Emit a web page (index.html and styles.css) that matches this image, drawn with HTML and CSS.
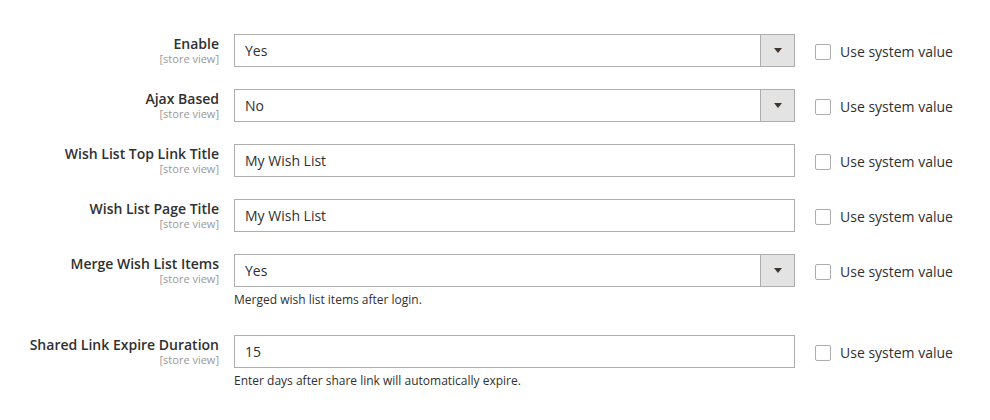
FILE: index.html
```html
<!DOCTYPE html>
<html>
<head>
<meta charset="utf-8">
<link rel="stylesheet" href="styles.css">
</head>
<body>
<div class="form">
  <div class="row">
    <div class="label"><span class="title">Enable</span><span class="scope">[store view]</span></div>
    <div class="control">
      <div class="select"><span class="value">Yes</span><span class="arrow"></span></div>
    </div>
    <label class="sys"><span class="box"></span><span class="sys-text">Use system value</span></label>
  </div>
  <div class="row">
    <div class="label"><span class="title">Ajax Based</span><span class="scope">[store view]</span></div>
    <div class="control">
      <div class="select"><span class="value">No</span><span class="arrow"></span></div>
    </div>
    <label class="sys"><span class="box"></span><span class="sys-text">Use system value</span></label>
  </div>
  <div class="row">
    <div class="label"><span class="title">Wish List Top Link Title</span><span class="scope">[store view]</span></div>
    <div class="control">
      <div class="input"><span class="value">My Wish List</span></div>
    </div>
    <label class="sys"><span class="box"></span><span class="sys-text">Use system value</span></label>
  </div>
  <div class="row">
    <div class="label"><span class="title">Wish List Page Title</span><span class="scope">[store view]</span></div>
    <div class="control">
      <div class="input"><span class="value">My Wish List</span></div>
    </div>
    <label class="sys"><span class="box"></span><span class="sys-text">Use system value</span></label>
  </div>
  <div class="row">
    <div class="label"><span class="title">Merge Wish List Items</span><span class="scope">[store view]</span></div>
    <div class="control">
      <div class="select"><span class="value">Yes</span><span class="arrow"></span></div>
      <p class="note">Merged wish list items after login.</p>
    </div>
    <label class="sys"><span class="box"></span><span class="sys-text">Use system value</span></label>
  </div>
  <div class="row">
    <div class="label"><span class="title">Shared Link Expire Duration</span><span class="scope">[store view]</span></div>
    <div class="control">
      <div class="input"><span class="value">15</span></div>
      <p class="note">Enter days after share link will automatically expire.</p>
    </div>
    <label class="sys"><span class="box"></span><span class="sys-text">Use system value</span></label>
  </div>
</div>
</body>
</html>
```

FILE: styles.css
```css
html, body {
  margin: 0;
  padding: 0;
  background: #ffffff;
}
body {
  font-family: "Open Sans", "Liberation Sans", sans-serif;
  color: #303030;
}
.form {
  padding-top: 34px;
  display: flex;
  flex-direction: column;
  gap: 22px;
}
.row {
  display: flex;
  align-items: flex-start;
}
.label {
  width: 219px;
  flex: none;
  display: flex;
  flex-direction: column;
  align-items: flex-end;
  text-align: right;
  padding-top: 2px;
  margin-right: 15px;
}
.title {
  font-size: 14px;
  font-weight: 600;
  line-height: 16px;
  color: #303030;
}
.scope {
  font-size: 11px;
  line-height: 13px;
  color: #999999;
}
.control {
  width: 561px;
  flex: none;
}
.select, .input {
  box-sizing: border-box;
  height: 33px;
  border: 1px solid #adadad;
  background: #ffffff;
  display: flex;
  align-items: center;
  font-size: 14px;
  color: #303030;
}
.value {
  flex: 1;
  padding-left: 10px;
}
.arrow {
  width: 33px;
  align-self: stretch;
  background: #e3e3e3;
  border-left: 1px solid #adadad;
  display: flex;
  align-items: center;
  justify-content: center;
}
.arrow::after {
  content: "";
  width: 0;
  height: 0;
  border-style: solid;
  border-width: 5px 4px 0 4px;
  border-color: #41362f transparent transparent transparent;
}
.note {
  margin: 4px 0 4px;
  font-size: 12px;
  line-height: 18px;
  color: #303030;
}
.sys {
  display: flex;
  align-items: center;
  margin-left: 20px;
  height: 33px;
  padding-top: 2px;
  box-sizing: border-box;
}
.box {
  box-sizing: border-box;
  width: 16px;
  height: 16px;
  border: 1px solid #adadad;
  border-radius: 2px;
  background: #ffffff;
  margin-right: 9px;
}
.sys-text {
  font-size: 14px;
  color: #303030;
}
```
